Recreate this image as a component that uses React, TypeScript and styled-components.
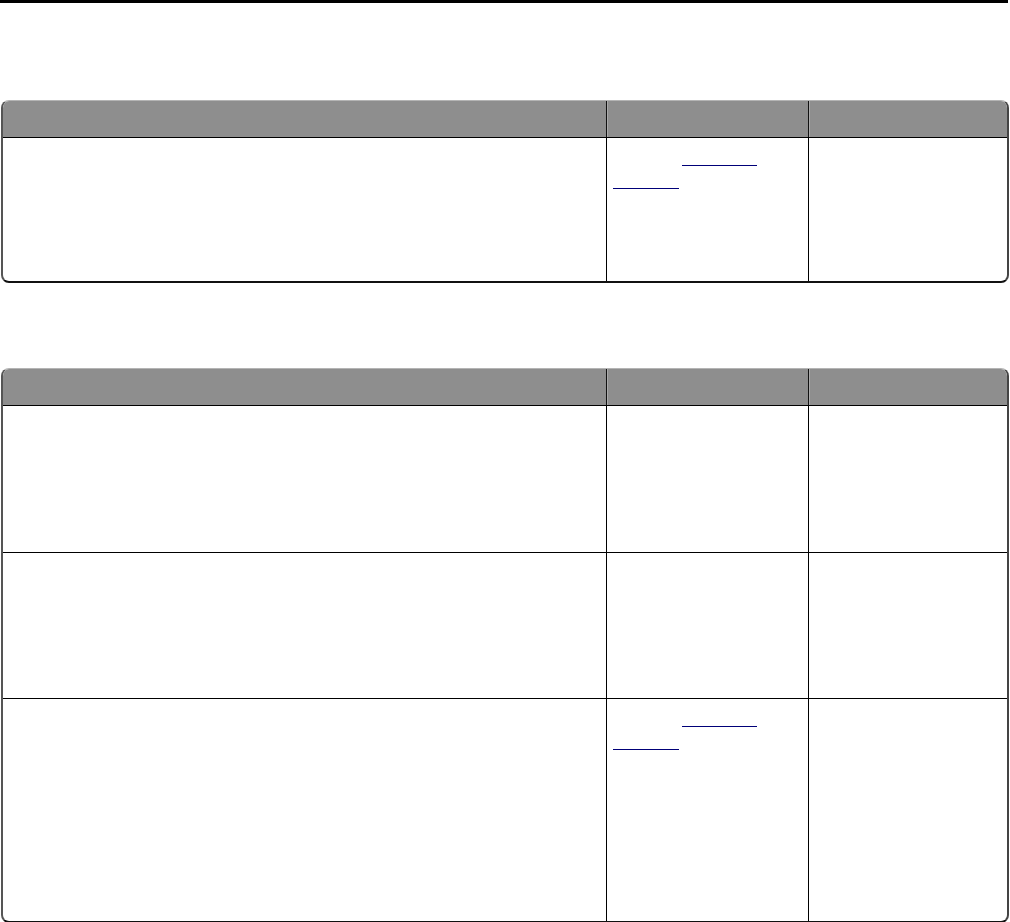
import styled, { createGlobalStyle } from "styled-components";

const GlobalStyle = createGlobalStyle`
  body {
    margin: 0;
    background: #fff;
    font-family: "Liberation Sans", Arial, sans-serif;
  }
`;

const Page = styled.div`
  width: 1010px;
  display: flex;
  flex-direction: column;
`;

const Rule = styled.hr`
  margin: 0;
  border: none;
  height: 3px;
  width: 1008px;
  background: #000;
`;

const Table = styled.div<{ $top: number }>`
  margin: ${(p) => p.$top}px 0 0 1px;
  width: 1008px;
  box-sizing: border-box;
  border-style: solid;
  border-width: 1px 2px 2px 2px;
  border-color: #b4b4b4 #444 #111 #555;
  border-radius: 8px;
  overflow: hidden;
`;

const Grid = styled.div`
  display: grid;
  grid-template-columns: 603px 202px 1fr;
`;

const HeadRow = styled(Grid)`
  height: 36px;
  background: #8e8e8e;
`;

const Row = styled(Grid)<{ $h: number }>`
  height: ${(p) => p.$h}px;
  border-top: 1px solid #000;
  box-sizing: border-box;
`;

const HeadCell = styled.div`
  border-left: 1px solid #111;
  box-shadow: inset 1px 0 0 #aaa;
  &:first-child {
    border-left: none;
    box-shadow: none;
  }
`;

const Cell = styled.div`
  padding: 6px 6px 0;
  border-left: 1px solid #000;
  &:first-child {
    border-left: none;
  }
`;

const Line = styled.div`
  height: 23px;
  display: flex;
  align-items: flex-end;
`;

const LinkMark = styled.span<{ $w: number; $indent?: number }>`
  display: block;
  width: ${(p) => p.$w}px;
  margin-left: ${(p) => p.$indent ?? 0}px;
  margin-bottom: 1px;
  height: 0;
  border-bottom: 1px solid #000078;
`;

const LinkCell = () => (
  <Cell>
    <Line>
      <LinkMark $w={75} $indent={69} />
    </Line>
    <Line>
      <LinkMark $w={66} />
    </Line>
  </Cell>
);

const Head = () => (
  <HeadRow>
    <HeadCell />
    <HeadCell />
    <HeadCell />
  </HeadRow>
);

export default function App() {
  return (
    <Page>
      <GlobalStyle />
      <Rule />
      <Table $top={97}>
        <Head />
        <Row $h={144}>
          <Cell />
          <LinkCell />
          <Cell />
        </Row>
      </Table>
      <Table $top={85}>
        <Head />
        <Row $h={147}>
          <Cell />
          <Cell />
          <Cell />
        </Row>
        <Row $h={146}>
          <Cell />
          <Cell />
          <Cell />
        </Row>
        <Row $h={223}>
          <Cell />
          <LinkCell />
          <Cell />
        </Row>
      </Table>
    </Page>
  );
}
